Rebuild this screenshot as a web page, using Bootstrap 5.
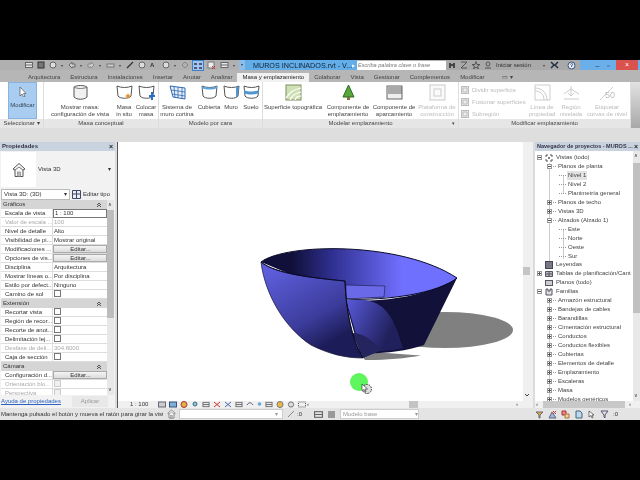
<!DOCTYPE html>
<html lang="es">
<head>
<meta charset="UTF-8">
<meta name="viewport" content="width=device-width, initial-scale=1">
<title>MUROS INCLINADOS.rvt</title>
<link href="https://cdn.jsdelivr.net/npm/bootstrap@5.3.3/dist/css/bootstrap.min.css" rel="stylesheet">
<style>
html,body{background:#000;margin:0;height:480px;overflow:hidden}
body{padding:60px 0;font:6px/9px "Liberation Sans",Arial,sans-serif;color:#333}
#app{height:360px;width:640px;display:flex;flex-direction:column;filter:blur(.3px);background:#dcdcdc}
svg{display:block;flex:none}
.titlebar{height:10px;background:#b2b2b2;align-items:center;flex:none}
.qat{width:245px;padding-left:25px;gap:4px;height:10px;background:#b0b0b0;position:relative}
.qat-a{width:3px;font-size:4px;line-height:9px;color:#444;flex:none}
.qat-active{background:#9fc6ee;outline:1px solid #3f80c8}
.qat-last{width:6px;height:10px;background:#8fbdea;color:#345;font-size:4px;line-height:9px;text-align:center;position:absolute;right:0;top:0}
.title-blue{width:112px;height:10px;background:#63aee9;color:#123;font-size:7.2px;padding-left:8px;white-space:nowrap;justify-content:space-between;padding-right:2px}
.title-arr{font-size:4px;color:#fff}
.search-box{width:89px;height:9px;background:#fff;color:#777;font-style:italic;font-size:5.6px;padding-left:1px;line-height:9px;white-space:nowrap}
.tool-right{width:134px;height:10px;gap:4px;padding-left:2px;background:#a9a9a9;white-space:nowrap}
.win-btns{width:60px;height:10px;background:#6aaeea;justify-content:flex-end;padding-right:2px}
.win-close{width:22px;height:10px;background:#d9524d;color:#fff;font-size:7px;text-align:center;line-height:10px;margin-left:2px}
.win-min{width:11px;text-align:center;color:#335;font-size:7px;line-height:9px}
.logo-r{left:2px;top:60px;width:17px;height:22px}
.tabs{height:12px;background:#b6b6b6;padding-top:3px;color:#444;white-space:nowrap;flex:none}
.tab-i{height:9px;line-height:9px}
.tab-on{background:#f1f1f1;color:#222;padding:0 5px;margin:0 5px}
.t-a{margin-left:28px}.t-m{margin-right:10px}
.ribbon{height:46px;background:#fff;flex:none}
.rgroup{display:flex;flex-direction:column;border-right:1px solid #ddd;flex:none}
.rgroup-body{height:37px;display:flex}
.rgroup-title{height:9px;background:#e6e6e6;text-align:center;line-height:9px;color:#444;position:relative}
.g1{width:44px}.g2{width:115px}.g3{width:104px}.g4{width:196px}.g5{width:172px}.g6{width:9px;background:linear-gradient(#e2e2e2,#a8a8a8);flex:none}
.rbtn{display:flex;flex-direction:column;align-items:center;text-align:center;line-height:7px;padding-top:2px;flex:none;color:#444;white-space:nowrap}
.rbtn svg{margin-bottom:3px;height:17px}
.rbtn-off{color:#bbb}
.w20{width:20px}.w24{width:24px}.w26{width:28px}.w30{width:30px}.w36{width:36px}.w40{width:40px}.w46{width:46px}.w60{width:60px}
.rbtn.btn-mod{width:29px;margin-left:8px;background:#a9cdf0;border:1px solid #86b3e0;color:#345;padding-top:4px}
.rbtn.btn-mod svg{margin-bottom:5px;height:10px}
.pad6{margin-left:6px}.pad4{margin-left:4px}.pad2{margin-left:2px}
.mini-list{width:66px;margin-left:2px;padding-top:2px;color:#bbb;flex:none}
.mini-row{height:12px;align-items:center;gap:3px;white-space:nowrap}
.chev{position:absolute;right:3px;top:0;font-size:5px}
.gapband{height:14px;background:#dedede;flex:none}
.workarea{height:266px;flex:none}
.left-pane{width:115px;flex:none;background:#f2f2f2;margin-right:2px}
.right-pane{width:105px;flex:none;background:#fff;margin-left:2px;overflow:hidden}
.pane-head{height:9px;background:#c9d3e0;font-weight:bold;color:#334;line-height:9px;padding:0 2px;justify-content:space-between;white-space:nowrap;overflow:hidden;flex:none}
.head-sm{font-size:5.500px}
.pane-x{font-size:7px;color:#222}
.type-box{height:37px;background:#f2f2f2;align-items:center;flex:none}
.type-thumb{width:35px;height:35px;background:#fff;margin-left:1px;margin-right:2px;align-items:center;justify-content:center}
.type-sel{height:12px;padding:0 1px;gap:2px;align-items:center;flex:none;white-space:nowrap}
.sel-box{width:69px;height:11px;background:#fff;border:1px solid #bbb;padding:0 2px;line-height:9px;justify-content:space-between}
.props{height:195px;overflow:hidden;flex:none}
.prop-col{width:106px;margin-left:1px;flex:none}
.prop-scroll{width:7px;background:#e8e8e8;flex:none;position:relative}
.thumb-v{height:108px;background:#bcbcbc;margin-top:10px}
.prop-up{position:absolute;top:0;left:1px;line-height:9px;font-size:5px}
.prop-dn{position:absolute;bottom:1px;left:1px;line-height:9px;font-size:5px}
.prop-sec{height:9px;background:#d5d5d5;line-height:9px;padding:0 5px 0 2px;justify-content:space-between;align-items:center;color:#333}
.prop-row{height:9px;line-height:8px;background:#fff;border-bottom:1px solid #ddd;white-space:nowrap}
.prop-l{width:52px;padding-left:4px;overflow:hidden;border-right:1px solid #ddd;flex:none}
.prop-v{flex:1;padding-left:1px;overflow:hidden}
.prop-edit{height:8px;line-height:7px;background:linear-gradient(#f4f4f4,#dcdcdc);border:1px solid #aaa;text-align:center}
.prop-inp{border:1px solid #777;height:9px;line-height:7px}
.chk{display:block;width:7px;height:7px;border:1px solid #777;background:#fff}
.chk-off{border-color:#ccc;background:#f0f0f0}
.off{color:#aaa}
.prop-foot{height:13px;padding:0 1px;justify-content:space-between;align-items:center;background:#f2f2f2;flex:none;white-space:nowrap}
.link-help{color:#2a62c0;text-decoration:underline}
.btn-apply{width:36px;height:11px;background:#e8e8e8;color:#999;line-height:11px;text-align:center;margin-right:6px}
.viewport{flex:1;position:relative;background:#fff;border-left:1px solid #555;display:flex;flex-direction:column;min-width:0}
.view-main{height:259px;flex:none}
.view-bar{height:7px;background:#f0f0f0;align-items:center;flex:none}
.scale-txt{margin-left:12px;margin-right:10px;width:18px;white-space:nowrap}
.hscroll{flex:1;height:7px;position:relative}
.thumb-h{position:absolute;left:103px;top:0;width:9px;height:7px;background:#c4c4c4}
.ar{position:absolute;top:-1px;font-size:6px;color:#333}
.ar-l{left:1px}
.ar-r{right:15px}
.ar-t{right:9px}
.tree{height:250px;overflow:hidden;flex:none;padding-top:2px;white-space:nowrap;color:#444;width:98px;
  background:linear-gradient(#ccc,#ccc) 14px 12px/1px 100px no-repeat,linear-gradient(#ccc,#ccc) 14px 150px/1px 100px no-repeat,linear-gradient(#ccc,#ccc) 28px 24px/1px 18px no-repeat,linear-gradient(#ccc,#ccc) 28px 78px/1px 30px no-repeat}
.tree-row{height:9px;line-height:9px;align-items:center}
.tree-row.cut{margin-bottom:-1px}
.exp{display:block;width:5px;height:5px;border:1px solid #999;background:#fff;flex:none;position:relative}
.exp::after{content:"";position:absolute;left:0;top:1px;width:3px;height:1px;background:#555}
.exp.plus::before{content:"";position:absolute;left:1px;top:0;width:1px;height:3px;background:#555}
.tl1{margin-left:1px;width:3px;border-top:1px dotted #999;flex:none;margin-right:2px}
.sp2{width:2px;flex:none}.sp7{width:10px;flex:none}.sp12{width:12px;flex:none}.sp-lf{width:24px;flex:none}
.tleaf{width:7px;margin-right:2px;border-top:1px dotted #999;flex:none}
.tree-sel{background:#e2e2e2;padding:0 1px;margin-left:-1px}
.ic-t{margin:0 3px}
.ic-t2{margin:0 3px 0 0}
.tree-foot{height:7px;background:#f0f0f0;position:relative;flex:none}
.tree-thumb{position:absolute;left:8px;width:82px;top:0;height:7px;background:#c8c8c8}
.tree-vs{width:7px;background:#e8e8e8;flex:none;position:relative}
.tree-vs-th{height:150px;background:#c0c0c0;margin-top:12px}
.statusbar{height:12px;background:#e4e4e4;align-items:center;white-space:nowrap;flex:none;padding-left:1px}
.st-msg{width:162px;overflow:hidden}
.st-in{width:104px;height:10px;background:#fff;border:1px solid #ccc;margin:0 4px 0 3px;text-align:right;color:#999;padding-right:4px;line-height:8px}
.st-base{width:79px;height:10px;background:#fff;border:1px solid #ccc;color:#999;padding-left:2px;line-height:8px;justify-content:space-between;margin-left:4px}
.st-z{margin:0 12px 0 2px}
.st-tools{margin-left:116px;gap:4px;align-items:center}
.tool-view{gap:3px;align-items:center}
</style>
</head>
<body>
<svg width="0" height="0" class="position-absolute">
  <defs>
    <symbol id="i-mass" viewBox="0 0 17 17"><path d="M2 3c3-2 10-2 13 0v10c-3 3-10 3-13 0z" fill="#f1f1f4" stroke="#555"/><path d="M2 3c3 2 10 2 13 0" fill="none" stroke="#777"/></symbol>
    <symbol id="i-insitu" viewBox="0 0 17 17"><path d="M1 2c4 2 11 2 15 0l-1 10c-2 3-11 3-13 0z" fill="#fff" stroke="#555"/><path d="M12 9l1 2 2 1-2 1-1 2-1-2-2-1 2-1z" fill="#e8912c"/></symbol>
    <symbol id="i-place" viewBox="0 0 17 17"><path d="M1 2c4 2 11 2 15 0l-1 10c-2 3-11 3-13 0z" fill="#fff" stroke="#555"/><path d="M11 11h2V8h2v3h2v2h-2v3h-2v-3h-2z" fill="#2a6fc0"/></symbol>
    <symbol id="i-roof" viewBox="0 0 17 17"><path d="M1 2c4 2 11 2 15 0l-1 10c-2 3-11 3-13 0z" fill="#fff" stroke="#555"/><path d="M1 2c4 2 11 2 15 0v2c-4 2-11 2-15 0z" fill="#5aa5dc"/></symbol>
    <symbol id="i-wall" viewBox="0 0 17 17"><path d="M1 2c4 2 11 2 15 0l-1 10c-2 3-11 3-13 0z" fill="#fff" stroke="#555"/><path d="M13 3.500l3-1.500-1 10-2 2z" fill="#4f95d2"/></symbol>
    <symbol id="i-floor" viewBox="0 0 17 17"><path d="M1 2c4 2 11 2 15 0l-1 10c-2 3-11 3-13 0z" fill="#fff" stroke="#555"/><path d="M1 6c4 2 11 2 15 0v3c-4 2-11 2-15 0z" fill="#4f95d2"/></symbol>
    <symbol id="i-curtain" viewBox="0 0 17 17"><path d="M1 2l15 2v11l-12-2z" fill="#e8f1fb" stroke="#2f6bb0"/><path d="M5 2.500l1 11M9 3l0 11M13 3.600v11M2 6l14 2M3 10l13 2" stroke="#2f6bb0" fill="none" stroke-width=".8"/></symbol>
    <symbol id="i-topo" viewBox="0 0 17 17"><rect x="1" y="1" width="15" height="15" fill="#cfe0b4" stroke="#7c8f63"/><path d="M1 14C5 8 9 5 16 4M5 16C7 11 11 9 16 8M10 16c1-3 3-4 6-4" fill="none" stroke="#fff" stroke-width="1.200"/></symbol>
    <symbol id="i-tree" viewBox="0 0 17 17"><path d="M8.500 1L14 13H3z" fill="#56a63c" stroke="#2f6b25"/><rect x="7" y="13" width="3" height="3" fill="#8a6b3c"/></symbol>
    <symbol id="i-park" viewBox="0 0 17 17"><rect x="1" y="2" width="15" height="13" fill="#eee" stroke="#666"/><path d="M3 3v7M5 3v7M7 3v7M9 3v7M11 3v7M13 3v7M15 3v7" stroke="#555" stroke-width=".9"/></symbol>
    <symbol id="i-plat" viewBox="0 0 17 17"><rect x="1" y="1" width="15" height="15" fill="#fafafa" stroke="#ccc"/><rect x="5" y="5" width="7" height="7" fill="none" stroke="#ccc"/></symbol>
    <symbol id="i-line" viewBox="0 0 17 17"><path d="M1 1h15v15H1z" fill="none" stroke="#ccc"/><path d="M1 7c5 0 9 3 9 9M1 4c7 0 12 5 12 12" fill="none" stroke="#ccc"/></symbol>
    <symbol id="i-reg" viewBox="0 0 17 17"><path d="M1 10l7-5 8 5M8 2v10M5 9l3 3 3-3M1 15h15" fill="none" stroke="#ccc"/></symbol>
    <symbol id="i-cont" viewBox="0 0 17 17"><path d="M1 16L14 3" stroke="#ccc" fill="none"/><text x="6" y="14" font-size="9" fill="#bbb" font-family="Liberation Sans">50</text></symbol>
    <symbol id="i-mini" viewBox="0 0 8 8"><rect x=".5" y=".5" width="7" height="7" fill="#eee" stroke="#bbb"/><path d="M2 2h4v4H2z" fill="none" stroke="#bbb"/></symbol>
    <symbol id="i-view" viewBox="0 0 8 8"><rect x=".5" y="1.500" width="7" height="5" fill="#e8e8e8" stroke="#666"/><path d="M.5 4h7" stroke="#666"/></symbol>
    <symbol id="i-q" viewBox="0 0 8 8"><circle cx="4" cy="4" r="3" fill="#ddd" stroke="#666"/></symbol>
    <symbol id="i-pin" viewBox="0 0 6 6"><path d="M1 3l2-2 2 2M1 5l2-2 2 2" fill="none" stroke="#333" stroke-width=".8"/></symbol>
    <symbol id="i-house" viewBox="0 0 14 16"><path d="M1 7l6-5.500 6 5.500-2 1v6.500H3V8z" fill="#f8f8f8" stroke="#555"/><path d="M3 8l4-3 4 3" fill="none" stroke="#777"/><rect x="5.500" y="10" width="3" height="4.500" fill="#bbb" stroke="#666" stroke-width=".5"/></symbol>
    <linearGradient id="g-inner" x1="0" x2="1" y1="0" y2="0"><stop offset=".16" stop-color="#10103a"/><stop offset=".36" stop-color="#2f2f90"/><stop offset=".72" stop-color="#7070ff"/></linearGradient>
    <linearGradient id="g-left" x1="0" x2=".6" y1="0" y2="1"><stop offset=".1" stop-color="#5e5edc"/><stop offset=".65" stop-color="#3c3c9c"/><stop offset=".92" stop-color="#1c1c58"/></linearGradient>
    <linearGradient id="g-lit" x1="0" x2="1" y1="0" y2=".5"><stop offset="0" stop-color="#5a5adc"/><stop offset=".85" stop-color="#20205c"/></linearGradient>
  </defs>
</svg>

<svg class="position-absolute logo-r" viewBox="0 0 17 22"><rect width="17" height="22" fill="#bcbcbc"/><path d="M3 3h6c4 0 5 2 5 4s-1 4-4 4l4 8h-4L7 12v7H3z" fill="#14367a"/></svg>

<div id="app">
  <div class="titlebar d-flex">
    <div class="qat d-flex align-items-center">
      <svg width="8" height="8"><use href="#i-view"/></svg>
      <svg width="8" height="8"><rect x="1" y="1" width="6" height="6" fill="#777" stroke="#333"/></svg>
      <svg width="8" height="8"><use href="#i-q"/></svg>
      <span class="qat-a">▾</span>
      <svg width="8" height="8"><path d="M1 4l3-3v2h3v3H4v1z" fill="#ccc" stroke="#666"/></svg>
      <span class="qat-a">▾</span>
      <svg width="8" height="8"><path d="M7 4L4 1v2H1v3h3v1z" fill="#ccc" stroke="#888"/></svg>
      <span class="qat-a">▾</span>
      <svg width="9" height="8"><rect x="1" y="3" width="7" height="3" fill="#ccc" stroke="#777"/></svg>
      <span class="qat-a">▾</span>
      <svg width="8" height="8"><path d="M1 7l6-6" stroke="#333" stroke-width="1.300"/></svg>
      <svg width="8" height="8"><use href="#i-q"/></svg>
      <span class="fw-bold">A</span>
      <svg width="8" height="8" class="ms-1"><use href="#i-q"/></svg>
      <span class="qat-a">▾</span>
      <svg width="8" height="8"><path d="M4 1l3 3-3 3-3-3z" fill="none" stroke="#888"/></svg>
      <svg width="10" height="9" class="qat-active"><path d="M1 2h3v2H1zM6 2h3v2H6zM1 6h3v2H1zM6 6h3v2H6z" fill="#557"/></svg>
      <svg width="9" height="8"><rect x="1" y="1" width="6" height="6" fill="#eee" stroke="#777"/><path d="M5 5l3 3M8 5L5 8" stroke="#c33"/></svg>
      <svg width="9" height="8"><use href="#i-view"/></svg>
      <span class="qat-a">▾</span>
      <span class="qat-last">▾</span>
    </div>
    <div class="title-blue d-flex align-items-center"><span>MUROS INCLINADOS.rvt - V...</span><span class="title-arr">▶</span></div>
    <div class="search-box">Escriba palabra clave o frase</div>
    <div class="tool-right d-flex align-items-center">
      <svg width="8" height="8"><path d="M1 2h2v5H1zM5 2h2v5H5zM3 3h2v2H3z" fill="#444"/></svg>
      <svg width="8" height="8"><path d="M1 1h6L1 7h6" fill="none" stroke="#555"/></svg>
      <svg width="8" height="8"><path d="M4 .500l1 3h3L5.500 5l1 3L4 6.200 1.500 8l1-3L0 3.500h3z" fill="none" stroke="#555"/></svg>
      <svg width="8" height="8"><circle cx="4" cy="3" r="2" fill="none" stroke="#555"/><path d="M1 7h6" stroke="#555"/></svg>
      <span>Iniciar sesión</span>
      <span class="qat-a ms-2">▾</span>
      <svg width="9" height="8"><path d="M1 1l3 3-3 3M8 1L5 4l3 3" fill="none" stroke="#234" stroke-width="1.500"/></svg>
      <svg width="9" height="9" class="ms-1"><circle cx="4.500" cy="4.500" r="3.500" fill="#eef" stroke="#357"/><path d="M3.500 3.500c.5-1.500 2.500-1 2 .3L4.500 5v1" fill="none" stroke="#357"/></svg>
      <span class="qat-a">▾</span>
    </div>
    <div class="win-btns d-flex align-items-center">
      <span class="win-min">–</span><span class="win-min">▫</span><span class="win-close">×</span>
    </div>
  </div>

  <div class="tabs d-flex">
    <span class="tab-i t-a t-m">Arquitectura</span>
    <span class="tab-i t-m">Estructura</span>
    <span class="tab-i t-m">Instalaciones</span>
    <span class="tab-i t-m">Insertar</span>
    <span class="tab-i t-m">Anotar</span>
    <span class="tab-i">Analizar</span>
    <span class="tab-i tab-on">Masa y emplazamiento</span>
    <span class="tab-i t-m">Colaborar</span>
    <span class="tab-i t-m">Vista</span>
    <span class="tab-i t-m">Gestionar</span>
    <span class="tab-i t-m">Complementos</span>
    <span class="tab-i t-m">Modificar</span>
    <span class="tab-i ms-2">▭ ▾</span>
  </div>

  <div class="ribbon d-flex">
    <div class="rgroup g1">
      <div class="rgroup-body">
        <div class="rbtn btn-mod"><svg width="8" height="10"><path d="M1 0v9l2-2 1.500 3 1.500-.7L4.500 6.500H7z" fill="#fff" stroke="#555" stroke-width=".7"/></svg>Modificar</div>
      </div>
      <div class="rgroup-title">Seleccionar ▾</div>
    </div>
    <div class="rgroup g2">
      <div class="rgroup-body">
        <div class="rbtn w60 pad6"><svg width="17" height="17"><use href="#i-mass"/></svg>Mostrar masa:<br>configuración de vista</div>
        <div class="rbtn w20 pad4"><svg width="17" height="17"><use href="#i-insitu"/></svg>Masa<br>in situ</div>
        <div class="rbtn w24"><svg width="17" height="17"><use href="#i-place"/></svg>Colocar<br>masa</div>
      </div>
      <div class="rgroup-title">Masa conceptual</div>
    </div>
    <div class="rgroup g3">
      <div class="rgroup-body">
        <div class="rbtn w36"><svg width="17" height="17"><use href="#i-curtain"/></svg>Sistema de<br>muro cortina</div>
        <div class="rbtn w24 pad2"><svg width="17" height="17"><use href="#i-roof"/></svg>Cubierta</div>
        <div class="rbtn w20"><svg width="17" height="17"><use href="#i-wall"/></svg>Muro</div>
        <div class="rbtn w20"><svg width="17" height="17"><use href="#i-floor"/></svg>Suelo</div>
      </div>
      <div class="rgroup-title">Modelo por cara</div>
    </div>
    <div class="rgroup g4">
      <div class="rgroup-body">
        <div class="rbtn w60"><svg width="17" height="17"><use href="#i-topo"/></svg>Superficie topográfica</div>
        <div class="rbtn w46 pad2"><svg width="17" height="17"><use href="#i-tree"/></svg>Componente de<br>emplazamiento</div>
        <div class="rbtn w46"><svg width="17" height="17"><use href="#i-park"/></svg>Componente de<br>aparcamiento</div>
        <div class="rbtn w40 rbtn-off"><svg width="17" height="17"><use href="#i-plat"/></svg>Plataforma de<br>construcción</div>
      </div>
      <div class="rgroup-title">Modelar emplazamiento<span class="chev">▾</span></div>
    </div>
    <div class="rgroup g5">
      <div class="rgroup-body">
        <div class="mini-list">
          <div class="mini-row d-flex"><svg width="8" height="8"><use href="#i-mini"/></svg>Dividir superficie</div>
          <div class="mini-row d-flex"><svg width="8" height="8"><use href="#i-mini"/></svg>Fusionar superficies</div>
          <div class="mini-row d-flex"><svg width="8" height="8"><use href="#i-mini"/></svg>Subregión</div>
        </div>
        <div class="rbtn w30 rbtn-off"><svg width="17" height="17"><use href="#i-line"/></svg>Línea de<br>propiedad</div>
        <div class="rbtn w26 rbtn-off"><svg width="17" height="17"><use href="#i-reg"/></svg>Región<br>nivelada</div>
        <div class="rbtn w40 rbtn-off pad2"><svg width="17" height="17"><use href="#i-cont"/></svg>Etiquetar<br>curvas de nivel</div>
      </div>
      <div class="rgroup-title">Modificar emplazamiento</div>
    </div>
    <div class="g6"></div>
  </div>

  <div class="gapband"></div>

  <div class="workarea d-flex">
    <div class="left-pane d-flex flex-column">
      <div class="pane-head d-flex"><span>Propiedades</span><span class="pane-x">×</span></div>
      <div class="type-box d-flex">
        <div class="type-thumb d-flex"><svg width="14" height="16"><use href="#i-house"/></svg></div>
        <span>Vista 3D</span><span class="ms-auto me-1">▾</span>
      </div>
      <div class="type-sel d-flex">
        <div class="sel-box d-flex"><span>Vista 3D: (3D)</span><span>▾</span></div>
        <svg width="9" height="9"><path d="M.5.500h8v8h-8zM.5 4h8M4.500.500v8" fill="#e8eef6" stroke="#446"/></svg>
        <span>Editar tipo</span>
      </div>
      <div class="props d-flex">
        <div class="prop-col">
          <div class="prop-sec d-flex"><span>Gráficos</span><svg width="6" height="6"><use href="#i-pin"/></svg></div>
          <div class="prop-row d-flex"><div class="prop-l">Escala de vista</div><div class="prop-v prop-inp">1 : 100</div></div>
          <div class="prop-row d-flex off"><div class="prop-l">Valor de escala ...</div><div class="prop-v">100</div></div>
          <div class="prop-row d-flex"><div class="prop-l">Nivel de detalle</div><div class="prop-v">Alto</div></div>
          <div class="prop-row d-flex"><div class="prop-l">Visibilidad de pi...</div><div class="prop-v">Mostrar original</div></div>
          <div class="prop-row d-flex"><div class="prop-l">Modificaciones ...</div><div class="prop-v prop-edit">Editar...</div></div>
          <div class="prop-row d-flex"><div class="prop-l">Opciones de vis...</div><div class="prop-v prop-edit">Editar...</div></div>
          <div class="prop-row d-flex"><div class="prop-l">Disciplina</div><div class="prop-v">Arquitectura</div></div>
          <div class="prop-row d-flex"><div class="prop-l">Mostrar líneas o...</div><div class="prop-v">Por disciplina</div></div>
          <div class="prop-row d-flex"><div class="prop-l">Estilo por defect...</div><div class="prop-v">Ninguno</div></div>
          <div class="prop-row d-flex"><div class="prop-l">Camino de sol</div><div class="prop-v"><span class="chk"></span></div></div>
          <div class="prop-sec d-flex"><span>Extensión</span><svg width="6" height="6"><use href="#i-pin"/></svg></div>
          <div class="prop-row d-flex"><div class="prop-l">Recortar vista</div><div class="prop-v"><span class="chk"></span></div></div>
          <div class="prop-row d-flex"><div class="prop-l">Región de recor...</div><div class="prop-v"><span class="chk"></span></div></div>
          <div class="prop-row d-flex"><div class="prop-l">Recorte de anot...</div><div class="prop-v"><span class="chk"></span></div></div>
          <div class="prop-row d-flex"><div class="prop-l">Delimitación lej...</div><div class="prop-v"><span class="chk"></span></div></div>
          <div class="prop-row d-flex off"><div class="prop-l">Desfase de deli...</div><div class="prop-v">304.8000</div></div>
          <div class="prop-row d-flex"><div class="prop-l">Caja de sección</div><div class="prop-v"><span class="chk"></span></div></div>
          <div class="prop-sec d-flex"><span>Cámara</span><svg width="6" height="6"><use href="#i-pin"/></svg></div>
          <div class="prop-row d-flex"><div class="prop-l">Configuración d...</div><div class="prop-v prop-edit">Editar...</div></div>
          <div class="prop-row d-flex off"><div class="prop-l">Orientación blo...</div><div class="prop-v"><span class="chk chk-off"></span></div></div>
          <div class="prop-row d-flex off"><div class="prop-l">Perspectiva</div><div class="prop-v"><span class="chk chk-off"></span></div></div>
        </div>
        <div class="prop-scroll"><span class="prop-up">∧</span><div class="thumb-v"></div><span class="prop-dn">∨</span></div>
      </div>
      <div class="prop-foot d-flex"><span class="link-help">Ayuda de propiedades</span><span class="btn-apply">Aplicar</span></div>
    </div>

    <div class="viewport">
      <div class="view-main">
        <svg width="415" height="259" viewBox="118 142 415 259">
          <ellipse cx="445" cy="330" rx="68" ry="18" fill="#808080"/>
          <path d="M358 351l63 4.500c-15 3-42 5-56 4.500z" fill="#808080"/>
          <path d="M261 262c25-19 140-21 196 16-12 14-55 22-110 20z" fill="url(#g-inner)"/>
          <path d="M346 285l39 1-1 11-38 2z" fill="#6a6ae8" stroke="#1a1a40" stroke-width=".6"/>
          <path d="M457 278l-33 67c-20 7-45 9-64 8l-15-53c40 3 85-5 112-22z" fill="#11113a"/>
          <path d="M346 300c8-1 14-1 19 0 12 2 18 7 22 12 5 6 7 12 10 18 2 6 4 13 6 18-7 2-15 3-23 3l-17 7z" fill="url(#g-lit)"/>
          <path d="M352 333c12 0 22 8 28 17l-17 8z" fill="#24245e"/>
          <path d="M261 262c4 33 24 66 50 83 18 9 34 13 52 13-11-18-17-48-18-77-32-3-70-7-84-19z" fill="url(#g-left)" stroke="#101030" stroke-width=".7"/>
          <path d="M345 281c1 30 7 60 18 77" fill="none" stroke="#0a0a20" stroke-width="1"/>
          <path d="M261 262c25-19 140-21 196 16M261 262c14 12 54 16 84 19M347 299c40 2 92-6 110-21" fill="none" stroke="#0a0a28" stroke-width="1"/>
          <circle cx="359" cy="382" r="9" fill="#5ff55f"/>
          <circle cx="367" cy="389" r="4.500" fill="#ddd" stroke="#333" stroke-dasharray="1.500 1"/>
          <path d="M362 384v7l2-1.500 1 2.500 1-.5-1-2.500h2.500z" fill="#fff" stroke="#222" stroke-width=".6"/>
          <rect x="523" y="142" width="10" height="259" fill="#f0f0f0"/>
          <rect x="523" y="267" width="7" height="8" fill="#c4c4c4"/>
          <path d="M525 394l2 2 2-2" fill="none" stroke="#444"/>
        </svg>
      </div>
      <div class="view-bar d-flex">
        <span class="scale-txt">1 : 100</span>
        <div class="tool-view d-flex">
          <svg width="8" height="7"><rect x=".5" y="1" width="7" height="5" fill="#ccc" stroke="#667"/></svg>
          <svg width="8" height="7"><rect x=".5" y="1" width="7" height="5" fill="#7fb0d8" stroke="#357"/></svg>
          <svg width="8" height="7"><circle cx="4" cy="3.500" r="3" fill="#e3b040" stroke="#a33"/></svg>
          <svg width="8" height="7"><circle cx="4" cy="3" r="2" fill="#8cc" stroke="#468"/></svg>
          <svg width="8" height="7"><use href="#i-view"/></svg>
          <svg width="8" height="7"><path d="M1 1l6 5M7 1L1 6" stroke="#c33"/></svg>
          <svg width="8" height="7"><path d="M1 1l6 5M7 1L1 6" stroke="#46a"/></svg>
          <svg width="8" height="7"><use href="#i-view"/></svg>
          <svg width="8" height="7"><path d="M1 4c2-3 4-3 6 0" fill="none" stroke="#557"/></svg>
          <svg width="5" height="7"><circle cx="2.500" cy="3" r="1.800" fill="#6ad"/></svg>
          <svg width="8" height="7"><use href="#i-view"/></svg>
          <svg width="8" height="7"><circle cx="4" cy="3.500" r="3" fill="#e8b84a" stroke="#777"/></svg>
          <svg width="8" height="7"><use href="#i-q"/></svg>
          <svg width="8" height="7"><rect x=".5" y="1" width="7" height="5" fill="none" stroke="#555" stroke-dasharray="1 1"/></svg>
        </div>
        <div class="hscroll"><span class="ar ar-l">‹</span><div class="thumb-h"></div><span class="ar ar-r">›</span></div>
      </div>
    </div>

    <div class="right-pane d-flex flex-column">
      <div class="pane-head head-sm d-flex"><span>Navegador de proyectos - MUROS ...</span><span class="pane-x">×</span></div>
      <div class="d-flex">
        <div class="tree">
          <div class="tree-row d-flex"><span class="sp2"></span><span class="exp"></span><svg class="ic-t" width="8" height="8"><path d="M1 1h2M1 1v2M7 1H5M7 1v2M1 7h2M1 7V5M7 7H5M7 7V5" stroke="#555"/><circle cx="4" cy="4" r="1" fill="#555"/></svg>Vistas (todo)</div>
          <div class="tree-row d-flex"><span class="sp12"></span><span class="exp"></span><span class="tl1"></span>Planos de planta</div>
          <div class="tree-row d-flex"><span class="sp-lf"></span><span class="tleaf"></span><span class="tree-sel">Nivel 1</span></div>
          <div class="tree-row d-flex"><span class="sp-lf"></span><span class="tleaf"></span>Nivel 2</div>
          <div class="tree-row d-flex"><span class="sp-lf"></span><span class="tleaf"></span>Planimetría general</div>
          <div class="tree-row d-flex"><span class="sp12"></span><span class="exp plus"></span><span class="tl1"></span>Planos de techo</div>
          <div class="tree-row d-flex"><span class="sp12"></span><span class="exp plus"></span><span class="tl1"></span>Vistas 3D</div>
          <div class="tree-row d-flex"><span class="sp12"></span><span class="exp"></span><span class="tl1"></span>Alzados (Alzado 1)</div>
          <div class="tree-row d-flex"><span class="sp-lf"></span><span class="tleaf"></span>Este</div>
          <div class="tree-row d-flex"><span class="sp-lf"></span><span class="tleaf"></span>Norte</div>
          <div class="tree-row d-flex"><span class="sp-lf"></span><span class="tleaf"></span>Oeste</div>
          <div class="tree-row cut d-flex"><span class="sp-lf"></span><span class="tleaf"></span>Sur</div>
          <div class="tree-row d-flex"><span class="sp7"></span><svg class="ic-t2" width="8" height="8"><rect x=".5" y=".5" width="7" height="7" fill="#778" stroke="#445"/></svg>Leyendas</div>
          <div class="tree-row d-flex"><span class="sp2"></span><span class="exp plus"></span><svg class="ic-t" width="8" height="8"><path d="M.5 1.500h7v5h-7zM.5 4h7M4 1.500v5" fill="#bbb" stroke="#556"/></svg>Tablas de planificación/Cant</div>
          <div class="tree-row d-flex"><span class="sp7"></span><svg class="ic-t2" width="8" height="8"><rect x=".5" y="1.500" width="7" height="5" fill="#ccc" stroke="#556"/></svg>Planos (todo)</div>
          <div class="tree-row d-flex"><span class="sp2"></span><span class="exp"></span><svg class="ic-t" width="8" height="8"><path d="M1 1h2v2h2V1h2v6H1z" fill="#ddd" stroke="#556"/></svg>Familias</div>
          <div class="tree-row d-flex"><span class="sp12"></span><span class="exp plus"></span><span class="tl1"></span>Armazón estructural</div>
          <div class="tree-row d-flex"><span class="sp12"></span><span class="exp plus"></span><span class="tl1"></span>Bandejas de cables</div>
          <div class="tree-row d-flex"><span class="sp12"></span><span class="exp plus"></span><span class="tl1"></span>Barandillas</div>
          <div class="tree-row d-flex"><span class="sp12"></span><span class="exp plus"></span><span class="tl1"></span>Cimentación estructural</div>
          <div class="tree-row d-flex"><span class="sp12"></span><span class="exp plus"></span><span class="tl1"></span>Conductos</div>
          <div class="tree-row d-flex"><span class="sp12"></span><span class="exp plus"></span><span class="tl1"></span>Conductos flexibles</div>
          <div class="tree-row d-flex"><span class="sp12"></span><span class="exp plus"></span><span class="tl1"></span>Cubiertas</div>
          <div class="tree-row d-flex"><span class="sp12"></span><span class="exp plus"></span><span class="tl1"></span>Elementos de detalle</div>
          <div class="tree-row d-flex"><span class="sp12"></span><span class="exp plus"></span><span class="tl1"></span>Emplazamiento</div>
          <div class="tree-row d-flex"><span class="sp12"></span><span class="exp plus"></span><span class="tl1"></span>Escaleras</div>
          <div class="tree-row d-flex"><span class="sp12"></span><span class="exp plus"></span><span class="tl1"></span>Masa</div>
          <div class="tree-row d-flex"><span class="sp12"></span><span class="exp plus"></span><span class="tl1"></span>Modelos genéricos</div>
        </div>
        <div class="tree-vs"><span class="prop-up">∧</span><div class="tree-vs-th"></div><span class="prop-dn">∨</span></div>
      </div>
      <div class="tree-foot"><span class="ar ar-l">‹</span><div class="tree-thumb"></div><span class="ar ar-t">›</span></div>
    </div>
  </div>

  <div class="statusbar d-flex">
    <div class="st-msg">Mantenga pulsado el botón y mueva el ratón para girar la vist</div>
    <svg class="ms-1" width="9" height="10"><use href="#i-house"/></svg>
    <div class="st-in">▾</div>
    <svg width="8" height="8"><path d="M1 7l6-6" stroke="#888"/></svg>
    <span class="st-z">:0</span>
    <svg width="9" height="9"><use href="#i-view"/></svg>
    <svg class="ms-1" width="9" height="9"><rect x="1" y="1" width="7" height="7" fill="#999"/></svg>
    <div class="st-base d-flex"><span>Modelo base</span><span>▾</span></div>
    <div class="st-tools d-flex">
      <svg width="9" height="9"><path d="M1 2h7L5 5v3H4V5z" fill="#e3b040" stroke="#667"/></svg>
      <svg width="9" height="9"><path d="M1 8l3-6 4 6z" fill="#9bd" stroke="#667"/><path d="M5 1l3 3M8 1L5 4" stroke="#c33"/></svg>
      <svg width="9" height="9"><path d="M1 1h4v4H1z" fill="#e88" stroke="#a33"/><path d="M4 4h4v4H4z" fill="#eca" stroke="#a73"/></svg>
      <svg width="9" height="9"><path d="M2 1h4l2 2v5H2z" fill="#bcd8f0" stroke="#467"/></svg>
      <svg width="9" height="9"><path d="M2 1v6l2-1.500 1 2.500 1-.5-1-2.500h2z" fill="#fff" stroke="#444" stroke-width=".7"/></svg>
      <svg width="9" height="9"><path d="M1 1h7L5 5v3L4 7V5z" fill="none" stroke="#557"/></svg>
      <span>:0</span>
    </div>
  </div>
</div>
</body>
</html>
